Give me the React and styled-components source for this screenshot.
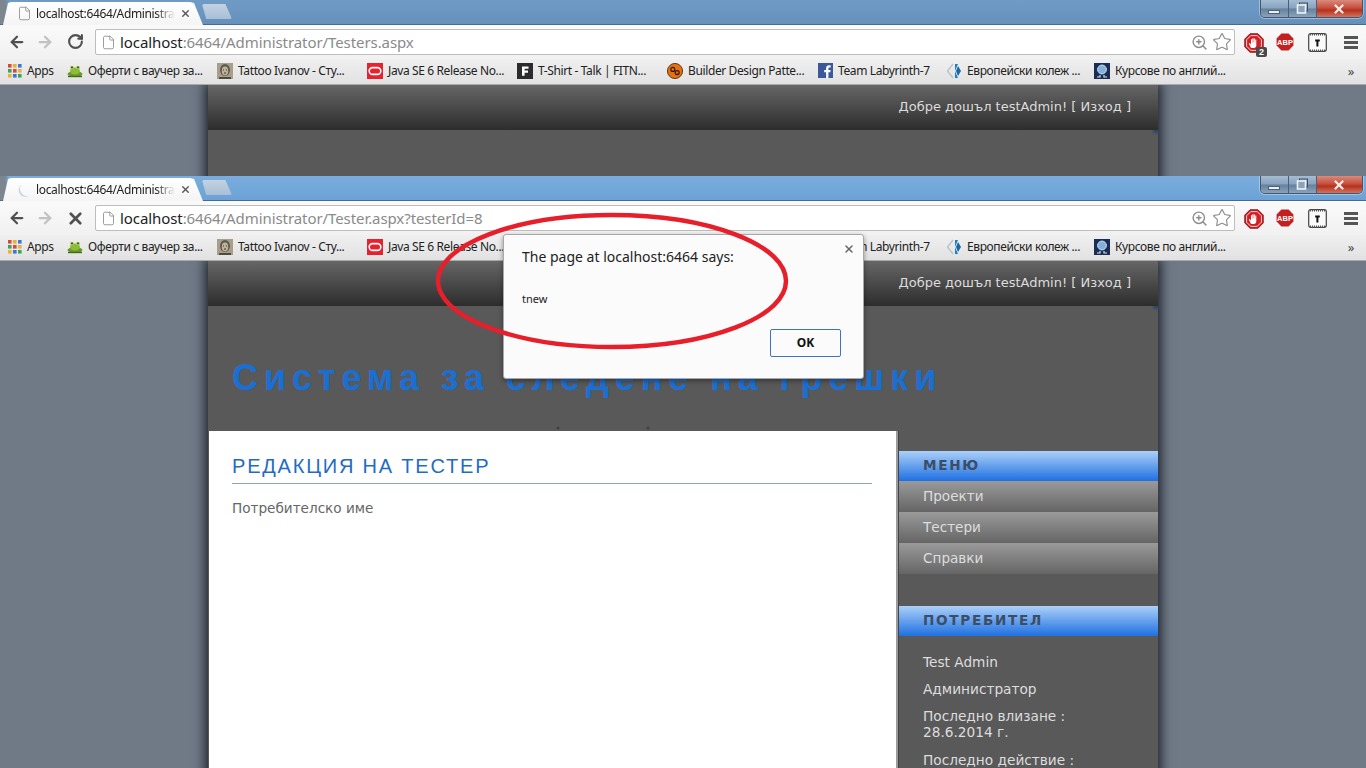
import React from "react";
import styled, { createGlobalStyle } from "styled-components";
import { ArrowLeft, ArrowRight, RotateCw, X, File, Star, ZoomIn } from "lucide-react";

const Global = createGlobalStyle`
  html, body { margin: 0; padding: 0; height: 100%; overflow: hidden; background: #707a87; }
`;

const Screen = styled.div`
  position: relative;
  width: 1366px;
  height: 768px;
  overflow: hidden;
  display: flex;
  flex-direction: column;
`;

const Win = styled.div`
  height: ${(p) => p.$height}px;
  display: flex;
  flex-direction: column;
  overflow: hidden;
  flex: none;
`;

const TabStrip = styled.div`
  position: relative;
  height: 25px;
  flex: none;
  display: flex;
  align-items: flex-end;
  padding-left: 3px;
  background: linear-gradient(90deg, #7d868f 0, #7d868f 5px, transparent 9px),
    ${(p) => p.$tint};
  border-bottom: 1px solid #4a6a8c;
  box-sizing: border-box;
`;

const Tab = styled.div`
  width: 200px;
  height: 23px;
  margin-bottom: -1px;
  box-sizing: border-box;
  padding: 0 12px 0 14px;
  display: flex;
  align-items: center;
  background: linear-gradient(#ffffff, #f4f4f4);
  clip-path: polygon(0 100%, 5px 4%, 8px 0, 187px 0, 191px 4%, 100% 100%);
  font: 12px "Noto Sans", sans-serif;
  letter-spacing: -0.35px;
  color: #222;
`;

const TabTitle = styled.span`
  flex: 1;
  margin-left: 4px;
  white-space: nowrap;
  overflow: hidden;
  -webkit-mask-image: linear-gradient(90deg, #000 86%, transparent 100%);
  mask-image: linear-gradient(90deg, #000 86%, transparent 100%);
`;

const TabClose = styled.span`
  display: flex;
  color: #555;
  margin-left: 5px;
`;

const NewTab = styled.div`
  width: 30px;
  height: 15px;
  margin: 0 0 5px -1px;
  background: linear-gradient(#c3d2e2, #a9bed6);
  border-radius: 2px;
  clip-path: polygon(0 0, 78% 0, 100% 100%, 14% 100%);
`;

const Controls = styled.div`
  position: absolute;
  top: 0;
  right: 3px;
  width: 103px;
  height: 18px;
  display: flex;
  box-sizing: border-box;
  border: 1px solid #44566b;
  border-top: none;
  border-radius: 0 0 5px 5px;
  overflow: hidden;
  box-shadow: 0 0 0 1px rgba(255, 255, 255, 0.35);
`;

const Ctl = styled.div`
  width: ${(p) => p.$w}px;
  display: flex;
  align-items: center;
  justify-content: center;
  border-right: ${(p) => (p.$close ? "none" : "1px solid #4d5f74")};
  background: ${(p) =>
    p.$close
      ? "linear-gradient(#d98a7c 0, #c9503f 45%, #b5321f 60%, #d2745f 100%)"
      : "linear-gradient(#a4bcd4 0, #88a3bf 48%, #64809e 52%, #8aa3bc 100%)"};
`;

const MinGlyph = styled.i`
  display: block;
  width: 12px;
  height: 4px;
  margin-top: 6px;
  background: #e9eef3;
  border: 1px solid #50606f;
  box-sizing: border-box;
`;

const Toolbar = styled.div`
  height: 34px;
  flex: none;
  display: flex;
  align-items: center;
  background: linear-gradient(#fafafa, #f1f1f1);
`;

const NavBtn = styled.div`
  width: 28px;
  flex: none;
  display: flex;
  justify-content: center;
  color: ${(p) => (p.$off ? "#c2c2c2" : "#505050")};
  &:last-child {
    margin-left: 2px;
  }
`;

const Nav = styled.div`
  display: flex;
  padding-left: 3px;
  width: 92px;
  flex: none;
`;

const UrlBox = styled.div`
  width: 1140px;
  height: 26px;
  flex: none;
  box-sizing: border-box;
  border: 1px solid #bdbdbd;
  border-radius: 2px;
  background: #fff;
  display: flex;
  align-items: center;
  padding: 0 2px 0 5px;
  font: 15px "Noto Sans", sans-serif;
  letter-spacing: -0.08px;
  color: #8a8a8a;
`;

const UrlText = styled.div`
  flex: 1;
  margin-left: 4px;
  white-space: nowrap;
  b {
    font-weight: 400;
    color: #222;
  }
`;

const UrlIcons = styled.div`
  display: flex;
  gap: 4px;
  color: #8d8d8d;
  align-items: center;
`;

const Extensions = styled.div`
  flex: 1;
  display: flex;
  align-items: center;
  padding-left: 9px;
  gap: 14px;
`;

const ExtSlot = styled.div`
  position: relative;
  width: 18px;
  height: 18px;
  flex: none;
`;

const Badge = styled.span`
  position: absolute;
  right: -5px;
  bottom: -6px;
  width: 11px;
  height: 10px;
  border-radius: 2px;
  background: #4a4a4a;
  color: #fff;
  font: bold 9px/10px "Liberation Sans", sans-serif;
  text-align: center;
`;

const Burger = styled.div`
  width: 14px;
  height: 13px;
  margin: 3px 0 0 4px;
  background: repeating-linear-gradient(#555 0, #555 3px, transparent 3px, transparent 5px);
`;

const Bookmarks = styled.div`
  height: 26px;
  flex: none;
  position: relative;
  display: flex;
  align-items: center;
  padding: 0 0 2px 8px;
  box-sizing: border-box;
  background: linear-gradient(#efefef, #e2e2e2);
  border-bottom: 1px solid #a9a9a9;
  font: 12px "Noto Sans", sans-serif;
  letter-spacing: -0.38px;
  color: #222;
`;

const Mark = styled.div`
  width: ${(p) => p.$w}px;
  flex: none;
  display: flex;
  align-items: center;
  gap: 5px;
  white-space: nowrap;
  svg {
    flex: none;
  }
`;

const More = styled.span`
  position: absolute;
  right: 12px;
  top: 3px;
  color: #444;
  font-size: 13px;
`;

const Viewport = styled.div`
  flex: 1;
  background: #707a87;
  overflow: hidden;
`;

const Site = styled.div`
  width: 950px;
  margin: 0 auto;
  background: #595959;
  min-height: 600px;
  box-shadow: 0 0 11px 3px #1c222b;
`;

const TopBar = styled.div`
  height: 45px;
  box-sizing: border-box;
  padding: 0 27px 2px 0;
  display: flex;
  align-items: center;
  justify-content: flex-end;
  background: linear-gradient(#666666, #2d2d2d);
  font: 13px "DejaVu Sans", sans-serif;
  color: #dcdcdc;
`;

const SiteHeader = styled.div`
  height: 125px;
  box-sizing: border-box;
  padding: 50px 0 0 24px;
  background: radial-gradient(circle 5px at 948px 0, #26406e, transparent),
    radial-gradient(circle 2px at 350px 122px, #333, transparent),
    radial-gradient(circle 2px at 440px 122px, #333, transparent);
`;

const Title = styled.h1`
  margin: 0;
  font: bold 36px/44px "Liberation Sans", sans-serif;
  letter-spacing: 5.9px;
  color: #1c6fd2;
  white-space: nowrap;
`;

const Columns = styled.div`
  display: flex;
  align-items: stretch;
`;

const Main = styled.main`
  width: 689px;
  min-height: 337px;
  margin-left: 1px;
  padding: 22px 24px 0 23px;
  box-sizing: border-box;
  background: #fff;
  border-right: 2px solid #9b9b9b;
  flex: none;
`;

const Heading = styled.h2`
  margin: 0;
  padding-bottom: 4px;
  border-bottom: 1px solid #8aa5bd;
  font: 400 20px/26px "Liberation Sans", sans-serif;
  letter-spacing: 1.8px;
  color: #1f6cc4;
  text-transform: uppercase;
`;

const Label = styled.div`
  margin-top: 16px;
  font: 13.6px/16px "DejaVu Sans", sans-serif;
  color: #666;
`;

const Side = styled.aside`
  flex: 1;
  padding-top: 20px;
  border-left: 1px solid #444;
`;

const SideTitle = styled.div`
  height: 30px;
  box-sizing: border-box;
  padding-left: 24px;
  background: linear-gradient(#abd0f8, #1f70e2);
  font: bold 13.6px/29px "DejaVu Sans", sans-serif;
  letter-spacing: 1.7px;
  color: #3c4d66;
`;

const MenuItem = styled.div`
  height: 31px;
  box-sizing: border-box;
  padding-left: 24px;
  background: linear-gradient(#9a9a9a, #656565);
  font: 13.6px/30px "DejaVu Sans", sans-serif;
  color: #dddddd;
`;

const Menu = styled.div`
  margin-bottom: 32px;
`;

const UserBox = styled.div`
  padding: 18px 24px 0;
  font: 13.7px/16px "DejaVu Sans", sans-serif;
  color: #dddddd;
  p {
    margin: 0 0 11px;
  }
  p:nth-child(3) {
    margin-bottom: 12px;
  }
`;

const Dialog = styled.div`
  position: absolute;
  left: 503px;
  top: 234px;
  width: 361px;
  height: 145px;
  box-sizing: border-box;
  padding: 12px 18px;
  background: #fbfbfb;
  border: 1px solid #a8a8a8;
  border-radius: 3px;
  box-shadow: 0 2px 5px rgba(0, 0, 0, 0.4);
  font-family: "Noto Sans", sans-serif;
  color: #222;
`;

const DialogClose = styled.span`
  position: absolute;
  right: 8px;
  top: 8px;
  display: flex;
  color: #666;
`;

const DialogTitle = styled.div`
  font-size: 14px;
  line-height: 19px;
`;

const DialogText = styled.div`
  margin-top: 25px;
  font-size: 11px;
  line-height: 15px;
`;

const OkButton = styled.button`
  position: absolute;
  right: 22px;
  bottom: 21px;
  width: 71px;
  height: 28px;
  padding: 0 0 2px;
  background: #fbfbfb;
  border: 1px solid #3f73bd;
  border-radius: 2px;
  font: bold 12px "Noto Sans", sans-serif;
  color: #111;
`;

const Circle = styled.svg`
  position: absolute;
  left: 430px;
  top: 205px;
  pointer-events: none;
`;

const AppsIcon = () => {
  const colors = ["#e0453a", "#e8b33a", "#3a78d8", "#3aa45a", "#e0453a", "#e8b33a", "#e8b33a", "#3a78d8", "#3aa45a"];
  return (
    <svg width="14" height="14" viewBox="0 0 14 14">
      {colors.map((c, i) => (
        <rect key={i} x={(i % 3) * 5} y={Math.floor(i / 3) * 5} width="3.6" height="3.6" fill={c} />
      ))}
    </svg>
  );
};

const FrogIcon = () => (
  <svg width="16" height="16" viewBox="0 0 16 16">
    <ellipse cx="8" cy="11" rx="7.5" ry="3" fill="#6a9a2a" />
    <ellipse cx="8" cy="8" rx="5" ry="3.4" fill="#8dbb3a" />
    <circle cx="5" cy="4.6" r="1.9" fill="#a6cf54" />
    <circle cx="11" cy="4.6" r="1.9" fill="#a6cf54" />
    <circle cx="5" cy="4.4" r=".8" fill="#222" />
    <circle cx="11" cy="4.4" r=".8" fill="#222" />
    <path d="M1 13.5 L15 13.5" stroke="#3f6a1a" strokeWidth="1.4" />
  </svg>
);

const TattooIcon = () => (
  <svg width="16" height="16" viewBox="0 0 16 16">
    <rect width="16" height="16" fill="#a89f8a" />
    <ellipse cx="8" cy="7" rx="5" ry="6" fill="#5f584b" />
    <ellipse cx="8" cy="8" rx="3.2" ry="4.4" fill="#bdb49e" />
    <path d="M6 7h1M9 7h1M7 10h2" stroke="#3f3a30" strokeWidth="1" />
    <path d="M2 15 L14 15" stroke="#4f493e" strokeWidth="2" />
  </svg>
);

const OracleIcon = () => (
  <svg width="16" height="16" viewBox="0 0 16 16">
    <rect width="16" height="16" fill="#e8212e" />
    <rect x="2.2" y="4.6" width="11.6" height="6.8" rx="3.4" fill="none" stroke="#fff" strokeWidth="1.6" />
  </svg>
);

const FitnIcon = () => (
  <svg width="16" height="16" viewBox="0 0 16 16">
    <rect width="16" height="16" fill="#2c2c2c" />
    <path d="M5 3.5h6.5v2.2H7.6v1.8h3.4v2.2H7.6v3H5z" fill="#fff" />
  </svg>
);

const BuilderIcon = () => (
  <svg width="16" height="16" viewBox="0 0 16 16">
    <circle cx="8" cy="8" r="7.6" fill="#e8710f" stroke="#3a1f05" strokeWidth=".8" />
    <circle cx="5.8" cy="6.4" r="2" fill="none" stroke="#2a1505" strokeWidth="1.1" />
    <circle cx="10.2" cy="9.6" r="2" fill="none" stroke="#2a1505" strokeWidth="1.1" />
  </svg>
);

const FbIcon = () => (
  <svg width="15" height="15" viewBox="0 0 15 15">
    <rect width="15" height="15" fill="#3b5998" />
    <path d="M10.4 15V9.2h1.9l.3-2.3h-2.2V5.5c0-.7.2-1.1 1.1-1.1h1.2v-2c-.3 0-.9-.1-1.7-.1-1.7 0-2.9 1-2.9 2.9v1.7H6.2v2.3h1.9V15z" fill="#fff" />
  </svg>
);

const KIcon = () => (
  <svg width="16" height="16" viewBox="0 0 16 16">
    <path d="M7 1 L1.5 8 L7 15" fill="none" stroke="#b9c4cc" strokeWidth="1.4" />
    <path d="M9 1h3L9 8l3 7H9z" fill="#1f7fc4" />
    <path d="M12 3l3 5-3 5-2-5z" fill="#1768a8" />
  </svg>
);

const OmegaIcon = () => (
  <svg width="16" height="16" viewBox="0 0 16 16">
    <rect width="16" height="16" fill="#1c2d55" />
    <circle cx="8" cy="6.5" r="4.4" fill="#7fb2dc" stroke="#d3e2ee" strokeWidth="1" />
    <path d="M3 14h3v-2M13 14h-3v-2" fill="none" stroke="#d3e2ee" strokeWidth="1.2" />
  </svg>
);

const HandIcon = () => (
  <svg width="20" height="20" viewBox="0 0 20 20">
    <path d="M6 .8h8L19.2 6v8L14 19.2H6L.8 14V6z" fill="#d11f26" stroke="#8e1a1e" strokeWidth="1" />
    <path d="M2.6 6.8 6.8 2.6h6.4l4.2 4.2v6.4l-4.2 4.2H6.8l-4.2-4.2z" fill="none" stroke="#fff" strokeWidth=".8" />
    <path d="M7 15 4.8 10.5l1 -.5 1.2 1.6V6.2h1.1V9.5h.3V5.2h1.1v4.3h.3V5.6h1.1v3.9h.3V6.6h1.1v6c0 1.5-1 2.4-2.4 2.4z" fill="#fff" />
  </svg>
);

const AbpIcon = () => (
  <svg width="18" height="18" viewBox="0 0 18 18">
    <path d="M5.4.6h7.2l4.8 4.8v7.2l-4.8 4.8H5.4L.6 12.6V5.4z" fill="#c5201f" />
    <text x="9" y="11.8" textAnchor="middle" fontFamily="Liberation Sans" fontWeight="bold" fontSize="7.5" fill="#fff">ABP</text>
  </svg>
);

const RulerIcon = () => (
  <svg width="19" height="19" viewBox="0 0 19 19">
    <rect x=".7" y=".7" width="17.6" height="17.6" rx="2" fill="#fafafa" stroke="#444" strokeWidth="1.2" />
    <path d="M2 1.5h15M2 17.5h15" stroke="#555" strokeWidth="2" strokeDasharray="1 1" />
    <path d="M7.2 6.5h4.6v2H10.4v5H8.4v-5H7.2z" fill="#111" />
  </svg>
);

const Spinner = () => (
  <svg width="15" height="16" viewBox="0 0 16 16">
    <path d="M5 2 A6.5 6.5 0 0 0 13 14 A7.5 7.5 0 0 1 5 2z" fill="#c4d3e4" />
  </svg>
);

const marks = [
  [<FrogIcon />, "Оферти с ваучер за...", 150],
  [<TattooIcon />, "Tattoo Ivanov - Сту...", 150],
  [<OracleIcon />, "Java SE 6 Release No...", 150],
  [<FitnIcon />, "T-Shirt - Talk | FITN...", 150],
  [<BuilderIcon />, "Builder Design Patte...", 151],
  [<FbIcon />, "Team Labyrinth-7", 128],
  [<KIcon />, "Европейски колеж ...", 148],
  [<OmegaIcon />, "Курсове по англий...", 150],
];

const SitePage = ({ children }) => (
  <Viewport>
    <Site>
      <TopBar>Добре дошъл testAdmin! [ Изход ]</TopBar>
      <SiteHeader>
        <Title>Система за следене на грешки</Title>
      </SiteHeader>
      {children}
    </Site>
  </Viewport>
);

const BrowserWindow = ({ height, tint, path, loading, badge, children }) => (
  <Win $height={height}>
    <TabStrip $tint={tint}>
      <Tab>
        {loading ? <Spinner /> : <File size={15} color="#8f8f8f" strokeWidth={1.4} />}
        <TabTitle>localhost:6464/Administrator/{path}</TabTitle>
        <TabClose>
          <X size={11} strokeWidth={3} />
        </TabClose>
      </Tab>
      <NewTab />
      <Controls>
        <Ctl $w={28}>
          <MinGlyph />
        </Ctl>
        <Ctl $w={28}>
          <svg width="13" height="13" viewBox="0 0 13 13">
            <rect x="3.5" y="1" width="8" height="8" fill="none" stroke="#3f4f60" strokeWidth="1" />
            <rect x="1.5" y="3" width="8" height="8" fill="#8aa3bc" stroke="#eef2f6" strokeWidth="1.6" />
          </svg>
        </Ctl>
        <Ctl $w={47} $close>
          <X size={14} strokeWidth={4} color="#f3ecea" />
        </Ctl>
      </Controls>
    </TabStrip>
    <Toolbar>
      <Nav>
        <NavBtn>
          <ArrowLeft size={18} strokeWidth={3} />
        </NavBtn>
        <NavBtn $off>
          <ArrowRight size={18} strokeWidth={3} />
        </NavBtn>
        <NavBtn>{loading ? <X size={19} strokeWidth={3.4} /> : <RotateCw size={17} strokeWidth={3} />}</NavBtn>
      </Nav>
      <UrlBox>
        <File size={15} color="#8f8f8f" strokeWidth={1.4} />
        <UrlText>
          <b>localhost</b>:6464/Administrator/{path}
        </UrlText>
        <UrlIcons>
          <ZoomIn size={17} strokeWidth={2} />
          <Star size={20} strokeWidth={1.4} />
        </UrlIcons>
      </UrlBox>
      <Extensions>
        <ExtSlot>
          <HandIcon />
          {badge && <Badge>{badge}</Badge>}
        </ExtSlot>
        <ExtSlot>
          <AbpIcon />
        </ExtSlot>
        <ExtSlot>
          <RulerIcon />
        </ExtSlot>
        <ExtSlot>
          <Burger />
        </ExtSlot>
      </Extensions>
    </Toolbar>
    <Bookmarks>
      <Mark $w={59}>
        <AppsIcon />
        Apps
      </Mark>
      {marks.map(([icon, label, w]) => (
        <Mark key={label} $w={w}>
          {icon}
          {label}
        </Mark>
      ))}
      <More>»</More>
    </Bookmarks>
    <SitePage>{children}</SitePage>
  </Win>
);

export default function App() {
  return (
    <Screen>
      <Global />
      <BrowserWindow
        height={176}
        tint="linear-gradient(#6f9cc7, #6590ba)"
        path="Testers.aspx"
        badge="2"
      />
      <BrowserWindow
        height={592}
        tint="linear-gradient(#7aaddd, #6ca2d6)"
        path="Tester.aspx?testerId=8"
        loading
      >
        <Columns>
          <Main>
            <Heading>Редакция на тестер</Heading>
            <Label>Потребителско име</Label>
          </Main>
          <Side>
            <Menu>
              <SideTitle>МЕНЮ</SideTitle>
              <MenuItem>Проекти</MenuItem>
              <MenuItem>Тестери</MenuItem>
              <MenuItem>Справки</MenuItem>
            </Menu>
            <SideTitle>ПОТРЕБИТЕЛ</SideTitle>
            <UserBox>
              <p>Test Admin</p>
              <p>Администратор</p>
              <p>
                Последно влизане :
                <br />
                28.6.2014 г.
              </p>
              <p>Последно действие :</p>
            </UserBox>
          </Side>
        </Columns>
      </BrowserWindow>
      <Dialog>
        <DialogClose>
          <X size={12} strokeWidth={3} />
        </DialogClose>
        <DialogTitle>The page at localhost:6464 says:</DialogTitle>
        <DialogText>tnew</DialogText>
        <OkButton>OK</OkButton>
      </Dialog>
      <Circle width="370" height="155">
        <ellipse cx="182" cy="76" rx="174" ry="66" fill="none" stroke="#e61f2b" strokeWidth="4.5" />
      </Circle>
    </Screen>
  );
}
